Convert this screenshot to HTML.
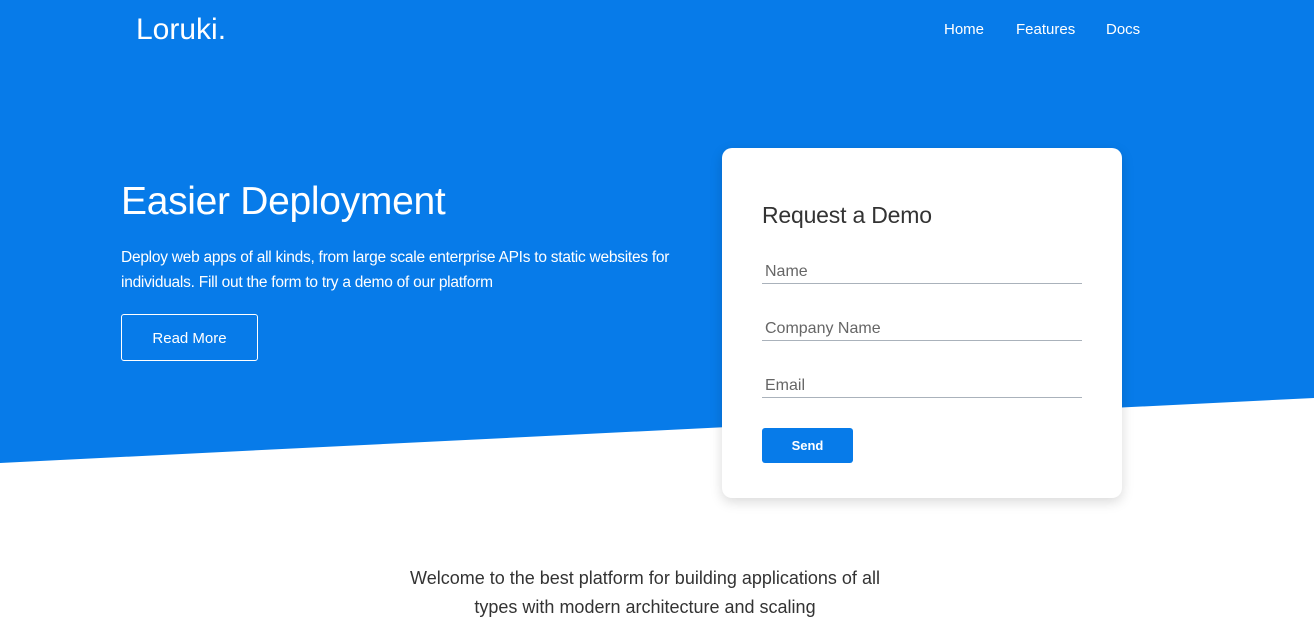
<!DOCTYPE html>
<html><head><style>
*{margin:0;padding:0;box-sizing:border-box}
body{width:1314px;height:610px;overflow:hidden;background:#fff;font-family:"Liberation Sans",sans-serif;position:relative}
.bg{position:absolute;left:0;top:0;width:1314px;height:463px;background:#077be9;clip-path:polygon(0 0,1314px 0,1314px 398px,0 463px)}
.logo{position:absolute;left:136px;top:13px;color:#fff;font-size:30px;font-weight:300}
.nav{position:absolute;top:21px;color:#fff;font-size:15px}
h1{position:absolute;left:121px;top:180px;color:#fff;font-size:39px;font-weight:normal;letter-spacing:-0.3px}
.p{position:absolute;left:121px;top:245px;width:580px;color:#fff;font-size:15.5px;line-height:25px;letter-spacing:-0.25px}
.btn{position:absolute;left:121px;top:314px;width:137px;height:47px;border:1px solid #fff;border-radius:3px;color:#fff;font-size:15px;text-align:center;line-height:47px}
.card{position:absolute;left:722px;top:148px;width:400px;height:350px;background:#fff;border-radius:10px;box-shadow:0 4px 12px rgba(0,0,0,.15)}
.card h2{position:absolute;left:40px;top:54px;font-size:23px;font-weight:normal;color:#333;letter-spacing:-0.2px}
.in{position:absolute;left:40px;width:320px;height:1px;background:#aab2bb}
.lab{position:absolute;left:43px;font-size:16px;color:#666}
.send{position:absolute;left:40px;top:280px;width:91px;height:35px;background:#077be9;border-radius:3px;color:#fff;font-size:13px;font-weight:bold;text-align:center;line-height:35px}
.welcome{position:absolute;left:0;width:1290px;top:564px;text-align:center;font-size:18px;color:#333;line-height:29px}
</style></head><body>
<div class="bg"></div>
<div class="logo">Loruki.</div>
<div class="nav" style="left:944px">Home</div>
<div class="nav" style="left:1016px">Features</div>
<div class="nav" style="left:1106px">Docs</div>
<h1>Easier Deployment</h1>
<div class="p">Deploy web apps of all kinds, from large scale enterprise APIs to static websites for individuals. Fill out the form to try a demo of our platform</div>
<div class="btn">Read More</div>
<div class="card">
<h2>Request a Demo</h2>
<div class="lab" style="top:115px">Name</div><div class="in" style="top:135px"></div>
<div class="lab" style="top:172px">Company Name</div><div class="in" style="top:192px"></div>
<div class="lab" style="top:229px">Email</div><div class="in" style="top:249px"></div>
<div class="send">Send</div>
</div>
<div class="welcome">Welcome to the best platform for building applications of all<br>types with modern architecture and scaling</div>
</body></html>
